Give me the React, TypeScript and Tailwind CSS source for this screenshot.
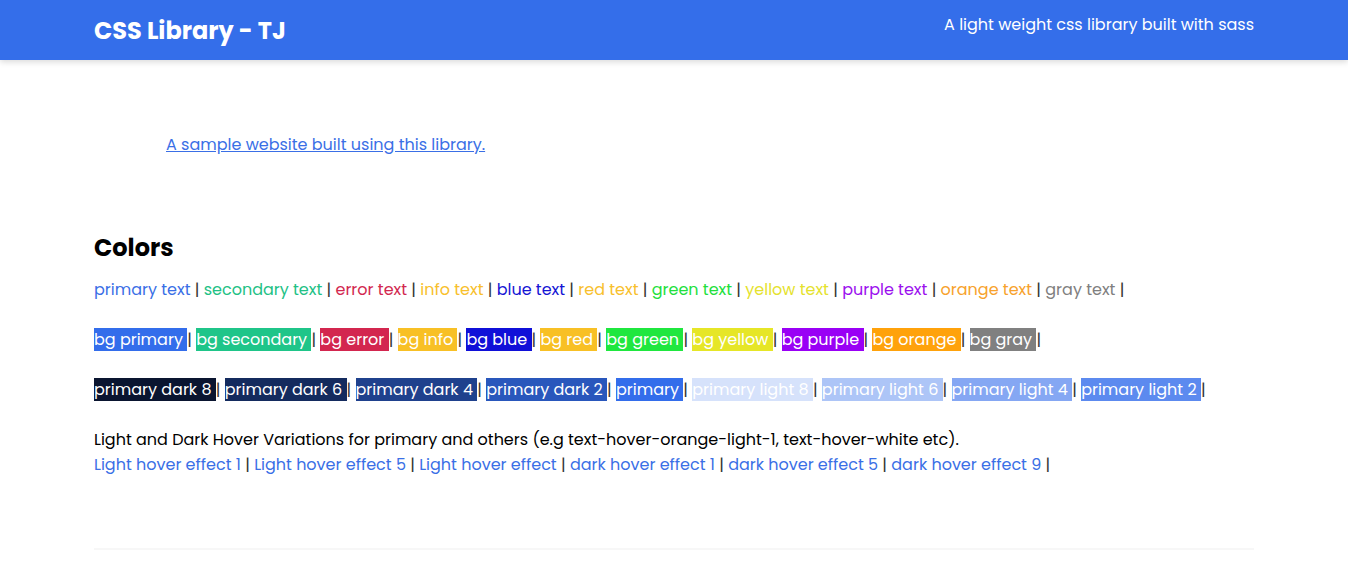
const textColors = [
  { label: "primary text", cls: "text-[#3a6fe6]" },
  { label: "secondary text", cls: "text-[#22c185]" },
  { label: "error text", cls: "text-[#d2284f]" },
  { label: "info text", cls: "text-[#f8c02c]" },
  { label: "blue text", cls: "text-[#1515d4]" },
  { label: "red text", cls: "text-[#f8c02c]" },
  { label: "green text", cls: "text-[#22df3c]" },
  { label: "yellow text", cls: "text-[#e5e22e]" },
  { label: "purple text", cls: "text-[#9b10ee]" },
  { label: "orange text", cls: "text-[#f7a22c]" },
  { label: "gray text", cls: "text-[#808080]" },
];

const bgColors = [
  { label: "bg primary", cls: "bg-[#336deb]" },
  { label: "bg secondary", cls: "bg-[#1fc589]" },
  { label: "bg error", cls: "bg-[#d3264f]" },
  { label: "bg info", cls: "bg-[#f8c025]" },
  { label: "bg blue", cls: "bg-[#1010d8]" },
  { label: "bg red", cls: "bg-[#f8c025]" },
  { label: "bg green", cls: "bg-[#1fe73f]" },
  { label: "bg yellow", cls: "bg-[#e6e627]" },
  { label: "bg purple", cls: "bg-[#9900f5]" },
  { label: "bg orange", cls: "bg-[#ffa20b]" },
  { label: "bg gray", cls: "bg-[#808080]" },
];

const shades = [
  { label: "primary dark 8", cls: "bg-[#0a1530]" },
  { label: "primary dark 6", cls: "bg-[#142b5e]" },
  { label: "primary dark 4", cls: "bg-[#1f418d]" },
  { label: "primary dark 2", cls: "bg-[#2957bc]" },
  { label: "primary", cls: "bg-[#336deb]" },
  { label: "primary light 8", cls: "bg-[#d6e2fb]" },
  { label: "primary light 6", cls: "bg-[#adc5f7]" },
  { label: "primary light 4", cls: "bg-[#85a7f3]" },
  { label: "primary light 2", cls: "bg-[#5c8aef]" },
];

const hovers = [
  "Light hover effect 1",
  "Light hover effect 5",
  "Light hover effect",
  "dark hover effect 1",
  "dark hover effect 5",
  "dark hover effect 9",
];

const font = { fontFamily: "'Poppins', 'Open Sans', sans-serif" };

export default function App() {
  return (
    <div className="min-h-[584px] bg-white text-black" style={font}>
      <header className="h-[60px] bg-[#346eea] shadow-[0_2px_6px_rgba(0,0,0,0.15)]">
        <div className="mx-auto flex h-full max-w-[1160px] items-start justify-between">
          <h1 className="mt-[15px] text-[24px] font-bold leading-[32px] text-white">CSS Library - TJ</h1>
          <p className="mt-[13px] text-[16px] leading-[24px] text-white">A light weight css library built with sass</p>
        </div>
      </header>

      <main className="mx-auto max-w-[1160px]">
        <div className="pl-[72px] pt-[73px]">
          <a href="#" className="text-[16px] leading-[24px] text-[#3a6fe6] underline">
            A sample website built using this library.
          </a>
        </div>

        <h2 className="mt-[75px] text-[24px] font-bold leading-[32px]">Colors</h2>

        <p className="mt-[14px] text-[16px] leading-[24px]">
          {textColors.map((t) => (
            <span key={t.label}>
              <span className={t.cls}>{t.label}</span>
              <span className="text-[#333]"> | </span>
            </span>
          ))}
        </p>

        <p className="mt-[26px] text-[16px] leading-[24px]">
          {bgColors.map((b) => (
            <span key={b.label}>
              <span className={`${b.cls} pr-[4.3px] text-white`}>{b.label}</span>
              <span className="text-[#333]">| </span>
            </span>
          ))}
        </p>

        <p className="mt-[26px] text-[16px] leading-[24px]">
          {shades.map((b) => (
            <span key={b.label}>
              <span className={`${b.cls} pr-[4.3px] text-white`}>{b.label}</span>
              <span className="text-[#333]">| </span>
            </span>
          ))}
        </p>

        <p className="mt-[25px] text-[16px] leading-[25px]">
          Light and Dark Hover Variations for primary and others (e.g text-hover-orange-light-1, text-hover-white etc).
        </p>
        <p className="text-[16px] leading-[25px]">
          {hovers.map((h) => (
            <span key={h}>
              <span className="text-[#3a6fe6]">{h}</span>
              <span className="text-[#333]"> | </span>
            </span>
          ))}
        </p>

        <hr className="mt-[71px] border-t-2 border-[#f7f7f7]" />
      </main>
    </div>
  );
}
